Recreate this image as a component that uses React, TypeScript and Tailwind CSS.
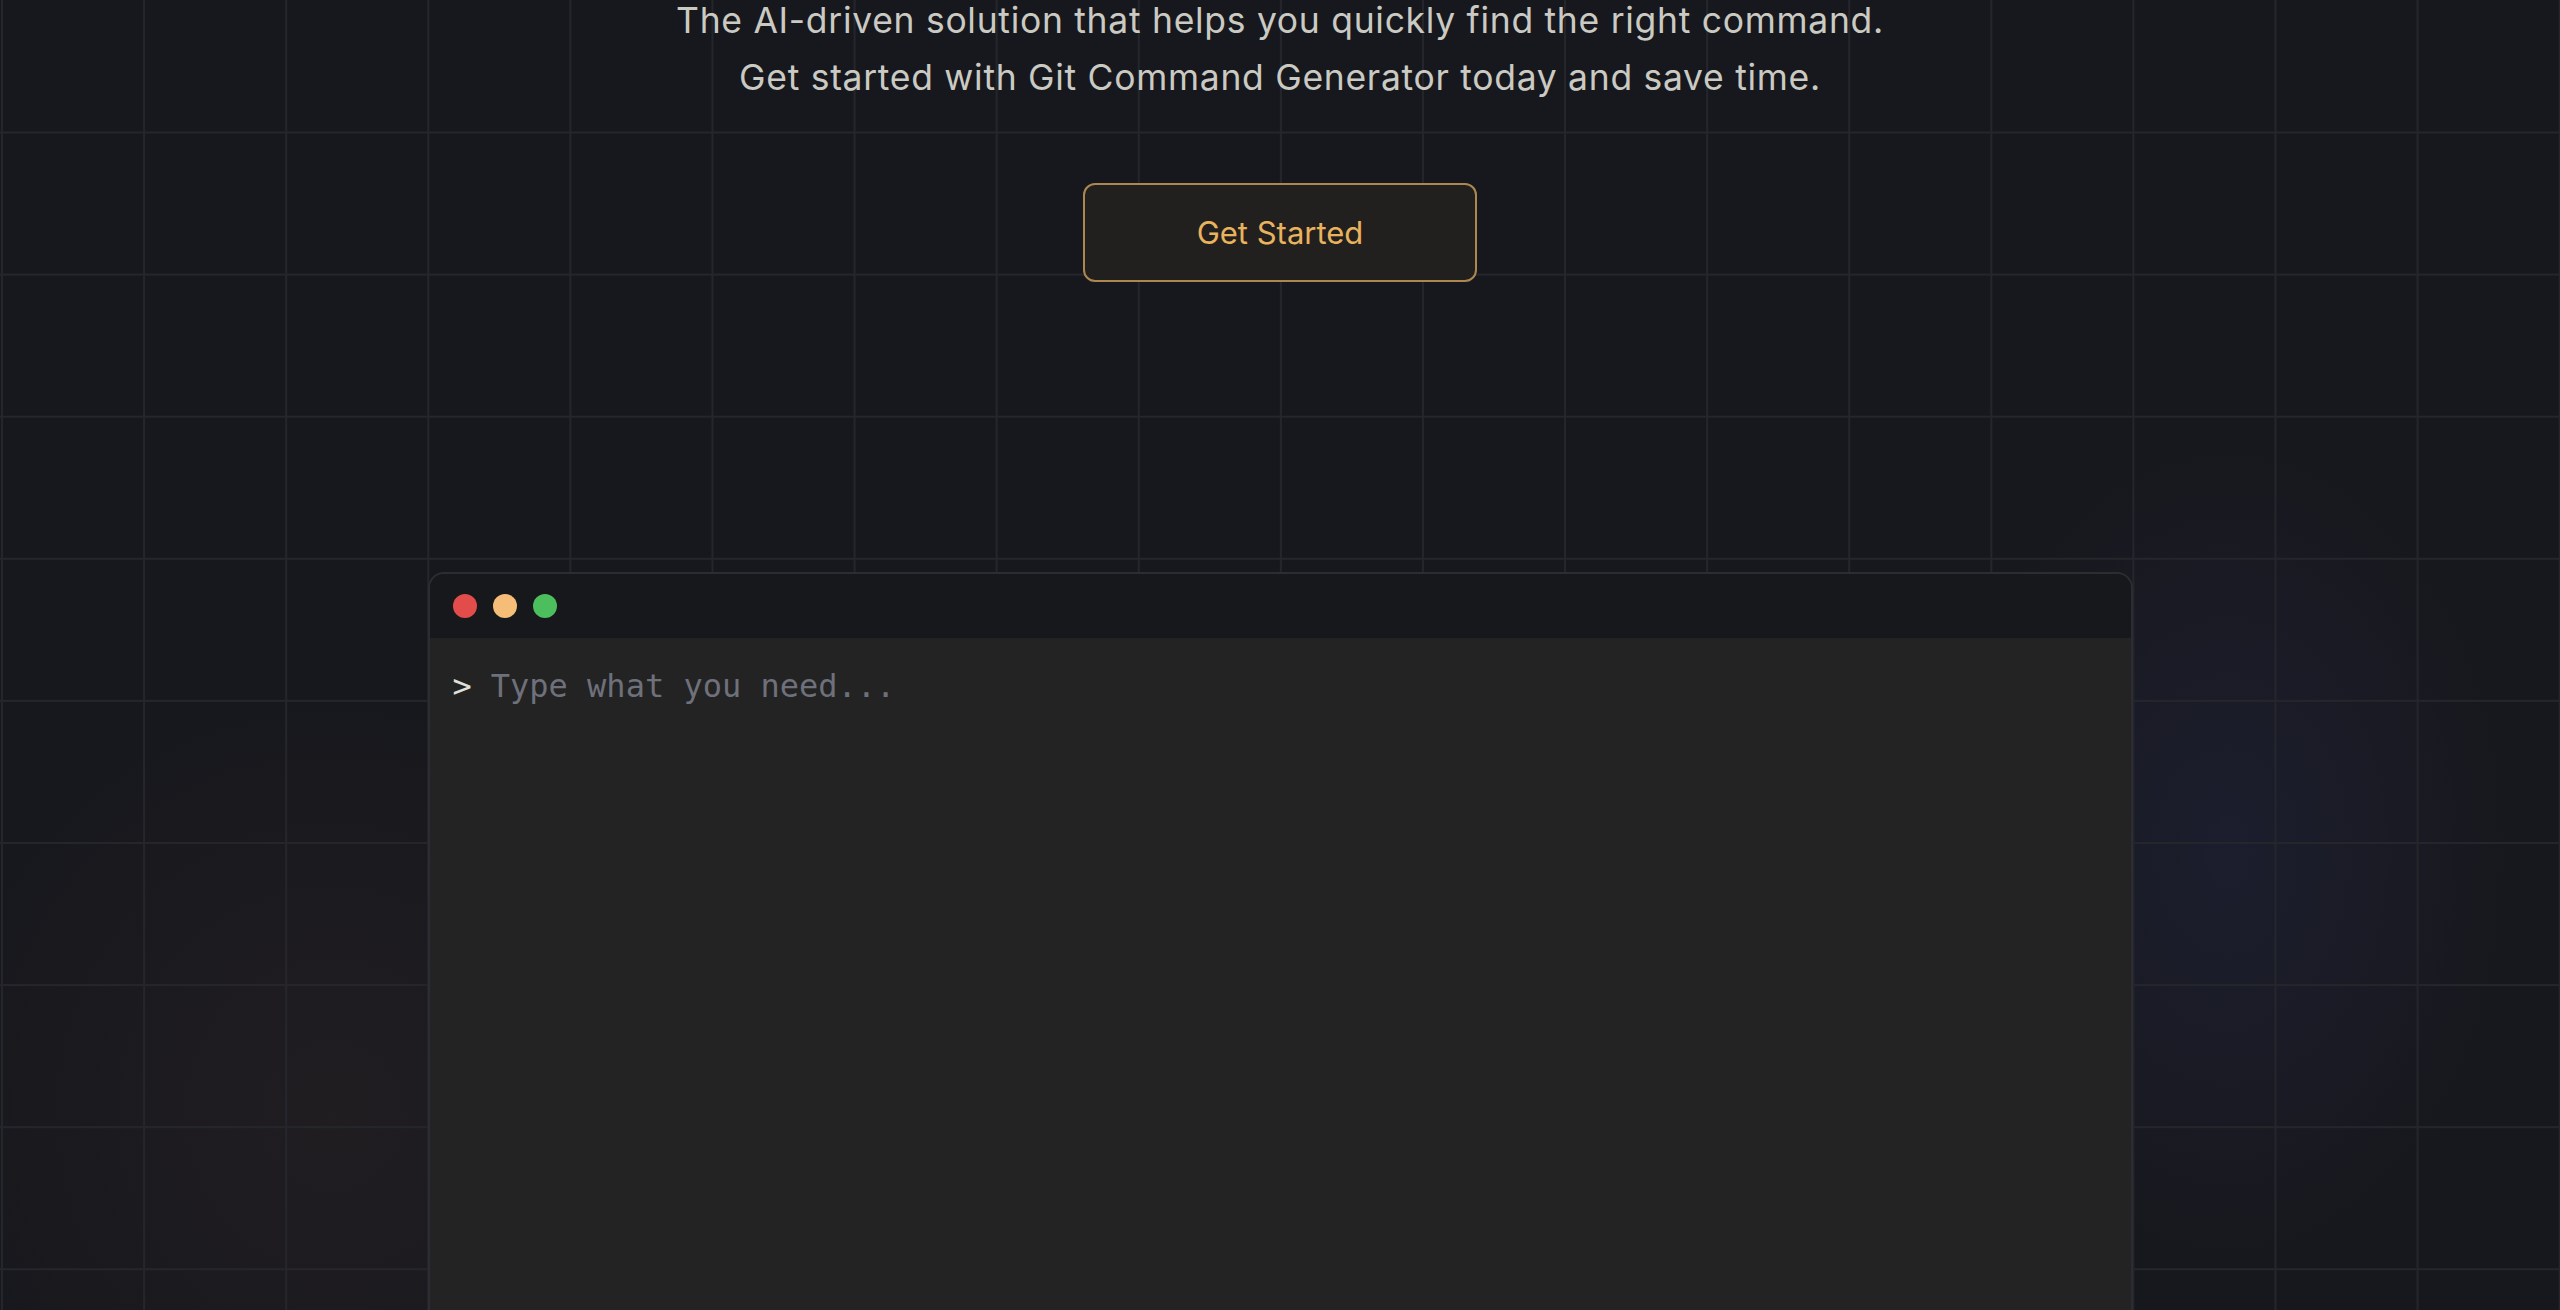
export default function App() {
  return (
    <div className="relative h-[1310px] w-full overflow-hidden bg-[#17181d] font-['Inter',sans-serif]">
      {/* soft glows under the grid */}
      <div className="pointer-events-none absolute inset-0 bg-[radial-gradient(ellipse_22%_45%_at_13%_85%,rgba(70,50,50,0.2),transparent_70%),radial-gradient(ellipse_16%_45%_at_87%_65%,rgba(45,50,105,0.22),transparent_70%)]" />
      {/* grid */}
      <div className="pointer-events-none absolute inset-0 bg-[linear-gradient(to_right,#25262b_2px,transparent_2px),linear-gradient(to_bottom,#25262b_2px,transparent_2px)] bg-[size:142.1px_142.1px] bg-[position:1px_131.5px]" />

      <main className="relative flex flex-col items-center">
        <p className="mt-[-8px] text-center text-[35.5px] leading-[57px] tracking-[0.7px] text-[#cacac3]">
          The AI-driven solution that helps you quickly find the right command.
          <br />
          Get started with Git Command Generator today and save time.
        </p>

        <button className="mt-[77px] flex h-[99px] w-[394px] items-center justify-center rounded-[12px] border-2 border-[#ac8750] bg-[#221f1f] pt-[2px] text-[31px] text-[#e9b35d]">
          Get Started
        </button>

        <section className="mt-[290px] flex h-[800px] w-[1705px] flex-col overflow-hidden rounded-t-[16px] border-2 border-[#2c2d32] bg-[#232323]">
          <div className="flex h-[64px] items-center gap-[16px] bg-[#17181c] px-[23px]">
            <span className="h-[24px] w-[24px] rounded-full bg-[#e24d4c]" />
            <span className="h-[24px] w-[24px] rounded-full bg-[#f5bd78]" />
            <span className="h-[24px] w-[24px] rounded-full bg-[#4dbe5d]" />
          </div>
          <div className="flex items-center px-[23px] pt-[24px] font-['DejaVu_Sans_Mono',monospace] text-[32px] leading-[48px]">
            <span className="text-[#e0e0da]">&gt;</span>
            <input
              className="ml-[19px] flex-1 bg-transparent text-[#e0e0da] outline-none placeholder:text-[#6e717b]"
              placeholder="Type what you need..."
            />
          </div>
        </section>
      </main>
    </div>
  );
}
